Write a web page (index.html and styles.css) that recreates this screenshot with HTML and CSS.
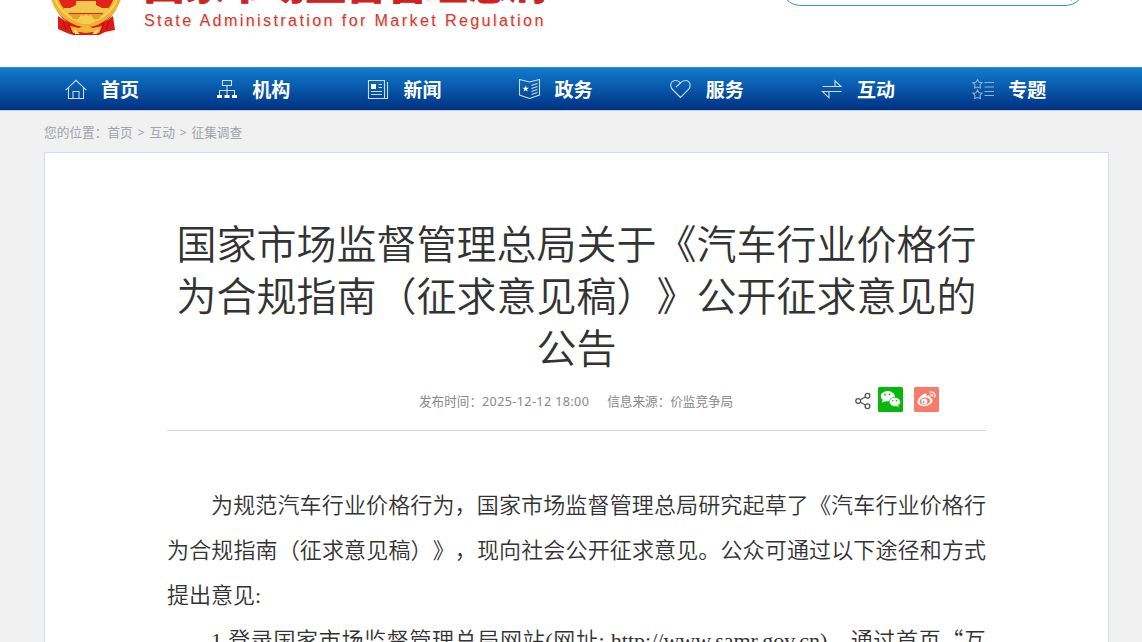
FILE: index.html
```
<!DOCTYPE html>
<html lang="zh-CN">

<head>
    <meta charset="UTF-8" />
    <title>国家市场监督管理总局</title>
    <link rel="stylesheet" href="styles.css">
</head>

<body>
    <header class="header">
        <div class="brand">
            <svg class="emblem" width="74" height="76" viewBox="0 0 74 76">
                <circle cx="36" cy="35" r="33" fill="#e2221f" />
                <path d="M8 56 Q20 66 36 65 Q52 66 63 56 L65 70 L55 72 L49 75 H23 L17 73 L8 69Z" fill="#dc1a16" />
                <path d="M13 61 L16 70 M18 63 L22 73 M59 61 L56 70 M54 63 L50 73" stroke="#b3100e" fill="none" />
                <path d="M3 30 Q5 51 23 60 Q30 64 36 63 Q43 64 49 60 Q67 51 69 30" fill="none" stroke="#efb32d" stroke-width="7" />
                <path d="M5 39 Q11 54 26 60 M67 39 Q61 54 46 60" fill="none" stroke="#f7d75b" stroke-width="2" />
                <path d="M26 45 V41 H46 V45 L52 48 H58 V53 H14 V48 H20Z" fill="#f3c64c" />
                <path d="M20 54 H52 L49 59 H23Z" fill="#e0a22b" />
                <path d="M29 58 L31 55 L34 56 L36 54 L38 56 L41 55 L43 58 L46 61 L40 64 H32 L26 61Z" fill="#f7cf50" />
                <path d="M20 66 L29 68 L36 65 L43 68 L52 66 L49 73 L43 72 L36 73 L29 72 L23 73Z" fill="#efb739" />
                <path d="M24 69 L25 74 H30Z M48 69 L47 74 H42Z" fill="#fbe47a" />
            </svg>
            <div class="brand-text">
                <div class="brand-cn">国家市场监督管理总局</div>
                <div class="brand-en">State Administration for Market Regulation</div>
            </div>
        </div>
        <div class="search">
            <svg class="search-icon" width="20" height="20" viewBox="0 0 20 20">
                <circle cx="8" cy="8" r="6" fill="none" stroke="#1b5fae" stroke-width="2" />
                <path d="M12.5 12.5 L18 18" stroke="#1b5fae" stroke-width="2" />
            </svg>
        </div>
    </header>

    <nav class="nav">
        <ul class="nav-list">
            <li>
                <svg class="nav-icon" viewBox="0 0 22 22">
                    <path d="M.7 11.1 L11 1.3 L21.3 11.1 M3.5 9 V19.5 H18.5 V9 M8 19.5 V12.5 H14 V19.5" />
                </svg>
                <span>首页</span>
            </li>
            <li>
                <svg class="nav-icon" viewBox="0 0 22 22">
                    <path d="M6.5 1.5 H15.5 V6.5 H6.5Z M11 6.5 V16 M3.5 16 V11.5 H18.5 V16" />
                    <path class="solid" d="M1 16 H6 V19 H1Z M8.5 16 H13.5 V19 H8.5Z M16 16 H21 V19 H16Z" />
                </svg>
                <span>机构</span>
            </li>
            <li>
                <svg class="nav-icon" viewBox="0 0 22 22">
                    <path d="M1.5 1.5 H17.5 V19.5 H1.5Z M20.5 3 V19.5 H17.5 M11.5 5.5 H15 M11.5 8.5 H15 M4 12.5 H15 M4 15.5 H15" />
                    <path class="solid" d="M4 5 H9 V10 H4Z" />
                </svg>
                <span>新闻</span>
            </li>
            <li>
                <svg class="nav-icon" viewBox="0 0 22 22">
                    <path d="M.5 .5 L10.5 3 L20.5 .5 V16 L10.5 19.5 L.5 16Z M12.5 6.5 L18.5 4.5 M12.5 9.5 L18.5 7.5 M12.5 12.5 L18.5 10.5 M12.5 15.5 L18.5 13.5" />
                    <path class="solid" d="M6.7 6.5 L7.5 8.8 H9.9 L8 10.2 L8.7 12.6 L6.7 11.2 L4.7 12.6 L5.4 10.2 L3.5 8.8 H5.9Z" />
                </svg>
                <span>政务</span>
            </li>
            <li>
                <svg class="nav-icon" viewBox="0 0 22 22">
                    <path d="M10.5 18.5 L2.5 10.5 C-1 7 1 1.5 5.5 1.5 C8 1.5 9.5 2.5 10.5 4 C11.5 2.5 13 1.5 15.5 1.5 C20 1.5 21.5 7 18.5 10.5Z M10.5 4 L6 8" />
                </svg>
                <span>服务</span>
            </li>
            <li>
                <svg class="nav-icon" viewBox="0 0 22 22">
                    <path d="M1.5 7.5 H20 L14 1.8 V7.5 M20.5 12.5 H1.5 L8 18.8 V12.5" />
                </svg>
                <span>互动</span>
            </li>
            <li>
                <svg class="nav-icon nav-icon-dim" viewBox="0 0 22 22">
                    <path d="M5.5 .5 L7 3.2 L10 3.7 L8 6 L8.4 9 L5.5 8 L2.6 9 L3 6 L1 3.7 L4 3.2Z M5.5 11 L7 13.7 L10 14.2 L8 16.5 L8.4 19.5 L5.5 18.5 L2.6 19.5 L3 16.5 L1 14.2 L4 13.7Z M12.5 3.5 H22 M12.5 8 H22 M12.5 12.5 H22 M12.5 16.5 H22" />
                </svg>
                <span>专题</span>
            </li>
        </ul>
    </nav>

    <div class="breadcrumb">您的位置：<a href="#">首页</a> &gt; <a href="#">互动</a> &gt; <a href="#">征集调查</a></div>

    <main class="article">
        <h1 class="title">国家市场监督管理总局关于《汽车行业价格行为合规指南（征求意见稿）》公开征求意见的公告</h1>
        <div class="meta">
            <div class="meta-text">
                <span>发布时间：<span class="date">2025-12-12 18:00</span></span>
                <span>信息来源：价监竞争局</span>
            </div>
            <div class="share">
                <svg class="share-icon" width="16" height="18" viewBox="0 0 16 18">
                    <g fill="none" stroke="#555" stroke-width="1.3">
                        <circle cx="3.2" cy="9" r="2.4" />
                        <circle cx="12.5" cy="3.8" r="2.4" />
                        <circle cx="12.5" cy="14.2" r="2.4" />
                        <path d="M5.4 7.8 L10.4 5 M5.4 10.2 L10.4 13" />
                    </g>
                </svg>
                <svg class="wechat" width="25" height="25" viewBox="0 0 25 25">
                    <rect width="25" height="25" rx="1.5" fill="#06b80b" />
                    <path d="M4 15.5 L4.7 12.8 A7 5.2 0 1 1 8.2 14.3Z" fill="#fff" />
                    <path d="M21 20.5 L20.6 18.2 A5.6 4.6 0 1 0 18 19.3Z" fill="#fff" stroke="#06b80b" stroke-width=".7" />
                    <g fill="#06b80b">
                        <circle cx="7" cy="7.5" r=".9" />
                        <circle cx="11.5" cy="7.5" r=".9" />
                        <circle cx="14.8" cy="13.7" r=".8" />
                        <circle cx="18.5" cy="13.7" r=".8" />
                    </g>
                </svg>
                <svg class="weibo" width="25" height="25" viewBox="0 0 25 25">
                    <rect width="25" height="25" rx="1.5" fill="#f77b6b" />
                    <path d="M10 7 C12 6 13 7 12.5 9 C15 8 17 8.4 16.4 10.8 C19 11.6 19.3 14.4 17 16.6 C13.5 20 5.5 20.2 3.7 16 C2.8 13 6.5 8.5 10 7Z" fill="#fff" />
                    <ellipse cx="10.8" cy="14.2" rx="5.3" ry="3.7" fill="#f77b6b" transform="rotate(-8 10.8 14.2)" />
                    <circle cx="10.3" cy="14.4" r="3" fill="#fff" />
                    <circle cx="9.6" cy="14.9" r="1" fill="#f77b6b" />
                    <path d="M15.5 5 C19.5 4.2 21.8 7 20.7 10.5 M16 7.5 C18 7.2 18.9 8.3 18.4 9.8" fill="none" stroke="#fff" stroke-width="1.3" />
                </svg>
            </div>
        </div>
        <div class="content">
            <p>为规范汽车行业价格行为，国家市场监督管理总局研究起草了《汽车行业价格行为合规指南（征求意见稿）》，现向社会公开征求意见。公众可通过以下途径和方式提出意见:</p>
            <p class="clipped">1.登录国家市场监督管理总局网站(网址: http://www.samr.gov.cn)，通过首页<span class="quote">“</span>互</p>
        </div>
    </main>
</body>

</html>
```
FILE: styles.css
```
* {
    box-sizing: border-box;
    margin: 0;
    padding: 0;
}

body {
    display: flex;
    flex-direction: column;
    height: 642px;
    font-family: 'Noto Sans', 'Noto Sans CJK SC', sans-serif;
    background: #f1f1f1;
    color: #333;
    overflow: hidden;
    text-spacing-trim: space-all;
}

.header {
    display: flex;
    justify-content: space-between;
    align-items: flex-end;
    flex: none;
    height: 67px;
    padding: 0 56px 0 50px;
    background: #fff;
}

.brand {
    display: flex;
    align-items: flex-end;
    gap: 20px;
    padding-bottom: 31px;
}

.emblem {
    display: block;
    flex: none;
}

.brand-text {
    white-space: nowrap;
    color: #d02020;
    padding-bottom: 2px;
}

.brand-cn {
    font-size: 40.4px;
    line-height: 48px;
    font-weight: 900;
    -webkit-text-stroke: 1px #d02020;
}

.brand-en {
    font-family: 'Liberation Sans', sans-serif;
    font-size: 16px;
    line-height: 26px;
    letter-spacing: 2.43px;
    color: #d23a35;
    text-shadow: 1px 1px 1px #e8d3c8;
}

.search {
    display: flex;
    justify-content: flex-end;
    align-items: flex-end;
    flex: none;
    width: 306px;
    height: 42px;
    margin-bottom: 61px;
    padding: 0 11px 3px;
    border: 1px solid #3c8fd2;
    border-radius: 21px;
}

.nav {
    flex: none;
    height: 43px;
    background: linear-gradient(#107ccd, #003183);
    border-top: 1px solid #3a8dcf;
}

.nav-list {
    display: flex;
    width: 1059px;
    margin-left: 65px;
    list-style: none;
}

.nav-list li {
    display: flex;
    align-items: center;
    flex: none;
    gap: 14px;
    width: 151.2px;
    height: 44px;
    color: #fff;
    font-size: 19px;
    line-height: 24px;
    font-weight: 700;
}

.nav-list span {
    padding-bottom: 1px;
}

.nav-icon {
    width: 22px;
    height: 22px;
    fill: none;
    stroke: #c9dcf0;
    stroke-width: 1.1;
}

.nav-icon .solid {
    fill: #fff;
    stroke: none;
}

.nav-icon-dim {
    stroke: #8fb0d8;
}

.breadcrumb {
    flex: none;
    height: 42px;
    padding-left: 44px;
    border-top: 1px solid #c3cde0;
    font-size: 12.7px;
    line-height: 43px;
    word-spacing: 1.4px;
    color: #a0a4aa;
}

.breadcrumb a {
    color: inherit;
    text-decoration: none;
}

.article {
    flex: 1;
    min-height: 0;
    width: 1065px;
    margin-left: 44px;
    padding: 65px 122px 0;
    background: #fff;
    border: 1px solid #d3dbee;
    border-bottom: none;
    overflow: hidden;
}

.title {
    font-size: 40px;
    line-height: 52px;
    font-weight: 350;
    text-align: center;
}

.meta {
    display: flex;
    justify-content: space-between;
    height: 57px;
    border-bottom: 1px solid #d5d5d5;
}

.meta-text {
    display: flex;
    gap: 18px;
    padding: 18px 0 0 252px;
    font-size: 12.6px;
    line-height: 20px;
    color: #888;
}

.date {
    letter-spacing: 0.38px;
}

.share {
    display: flex;
    padding: 13px 47px 0 0;
}

.share-icon {
    margin: 5px 7px 0 0;
}

.wechat {
    margin-right: 11px;
}

.content {
    margin-top: 52px;
    font-family: 'Liberation Serif', 'Noto Sans CJK SC', serif;
    font-size: 22px;
    line-height: 45px;
    font-weight: 350;
    text-align: justify;
}

.content p {
    text-indent: 2em;
}

.content .clipped {
    text-align-last: justify;
}

.quote {
    font-family: 'Noto Sans CJK SC', sans-serif;
    line-height: 1;
}
```
